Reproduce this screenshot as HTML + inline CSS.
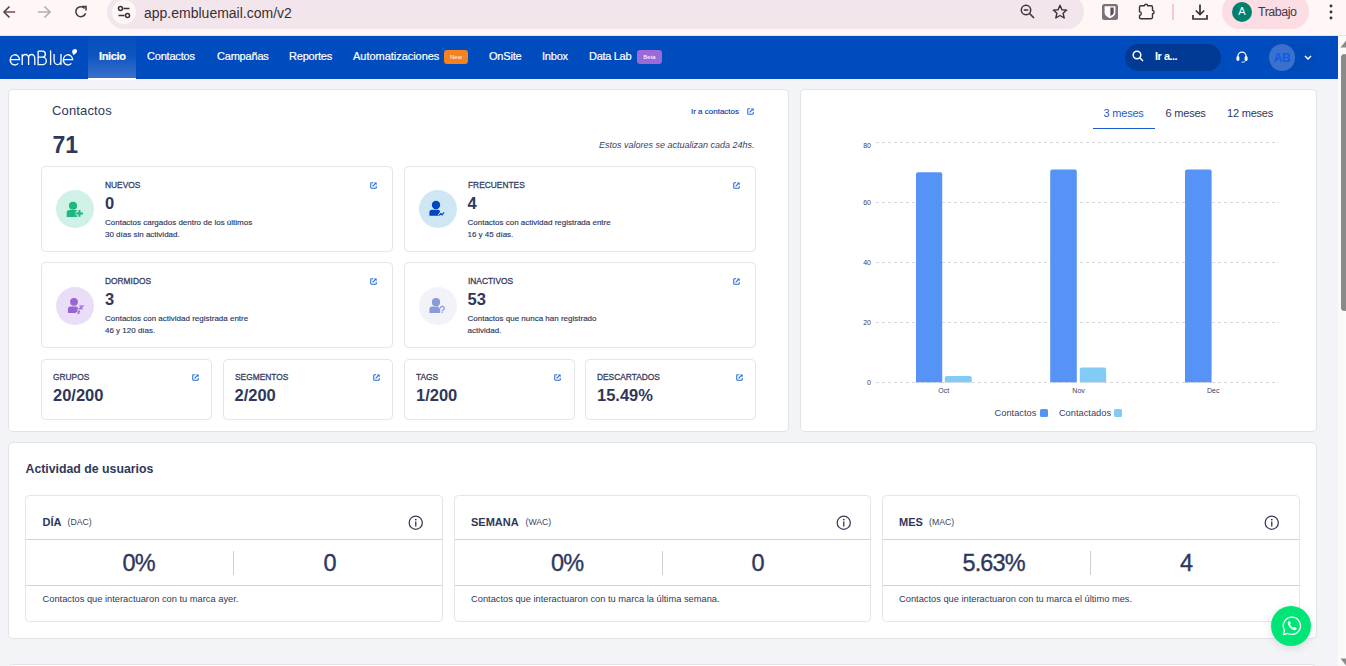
<!DOCTYPE html>
<html><head><meta charset="utf-8">
<style>
*{box-sizing:border-box;margin:0;padding:0}
html,body{width:1346px;height:666px;overflow:hidden}
body{position:relative;background:#F3F4F8;font-family:"Liberation Sans",sans-serif;color:#2F385C}
.a{position:absolute}
.t{position:absolute;white-space:nowrap;line-height:1}
/* chrome */
#chrome{position:absolute;left:0;top:0;width:1346px;height:36px;background:#FEF7F5}
#addr{position:absolute;left:107px;top:-5px;width:977px;height:34px;border-radius:17px;background:#F2E6EC}
#site{position:absolute;left:112px;top:0;width:24px;height:24px;border-radius:12px;background:#FEF7F5}
/* nav */
#nav{position:absolute;left:0;top:36px;width:1338px;height:43px;background:#004BBD}
.nv{position:absolute;top:50px;color:#fff;font-size:11px;line-height:12px;white-space:nowrap;letter-spacing:-0.2px;-webkit-text-stroke:0.2px #fff}
.badge{position:absolute;top:50px;height:14px;border-radius:3px;color:#fff;font-size:6px;line-height:14px;text-align:center}
/* cards */
.card{position:absolute;background:#fff;border:1px solid #E2E3E8;border-radius:5px}
.sc{position:absolute;background:#fff;border:1px solid #E4E5E9;border-radius:4.5px}
.lbl{position:absolute;font-size:9.3px;font-weight:400;line-height:10px;white-space:nowrap;color:#363D5E;letter-spacing:0;-webkit-text-stroke:0.3px #363D5E;transform:scaleX(0.9);transform-origin:0 0}
.val{position:absolute;font-size:16.5px;font-weight:700;line-height:17px;white-space:nowrap;color:#2F385C}
.desc{position:absolute;font-size:8px;line-height:12px;color:#2F385C;white-space:nowrap;-webkit-text-stroke:0.15px #2F385C}
.ext{position:absolute;width:7px;height:7px}
.circ{position:absolute;width:38px;height:38px;border-radius:19px}
</style></head><body>

<!-- browser chrome -->
<div id="chrome"></div>
<div id="addr"></div>
<div id="site"></div>
<div class="a" style="left:0;top:35px;width:1346px;height:1px;background:#F6DDE2"></div>

<!-- back arrow -->
<svg class="a" style="left:2px;top:5px" width="15" height="14" viewBox="0 0 15 14"><path d="M13.2 7H2.5" stroke="#7A4A55" stroke-width="1.5"/><path d="M7.5 1.5L2 7l5.5 5.5" fill="none" stroke="#4A3B50" stroke-width="1.5"/></svg>
<svg class="a" style="left:37px;top:5px" width="15" height="14" viewBox="0 0 15 14"><path d="M1 7h12M7.5 1.5L13 7l-5.5 5.5" fill="none" stroke="#BBAAB2" stroke-width="1.6"/></svg>
<svg class="a" style="left:74px;top:5px" width="14" height="14" viewBox="0 0 14 14"><path d="M11.6 8.2A5 5 0 1 1 10.6 3.4" fill="none" stroke="#4A3B44" stroke-width="1.6"/><path d="M8 1.5h4v4" fill="none" stroke="#4A3B44" stroke-width="1.6"/></svg>
<svg class="a" style="left:117px;top:5px" width="14" height="14" viewBox="0 0 14 14"><circle cx="3.5" cy="3.5" r="2" fill="none" stroke="#3C2F38" stroke-width="1.5"/><path d="M6.5 3.5H12.5M1.5 10.5H7.5" stroke="#3C2F38" stroke-width="1.5"/><circle cx="10.5" cy="10.5" r="2" fill="none" stroke="#3C2F38" stroke-width="1.5"/></svg>
<div class="t" style="left:144px;top:5px;font-size:14px;line-height:16px;color:#3A2E36">app.embluemail.com/v2</div>
<!-- zoom -->
<svg class="a" style="left:1020px;top:4px" width="16" height="16" viewBox="0 0 16 16"><circle cx="6" cy="6" r="4.7" fill="none" stroke="#3C2F38" stroke-width="1.5"/><path d="M3.8 6h4.4M9.5 9.5l4.5 4.5" stroke="#3C2F38" stroke-width="1.6"/></svg>
<svg class="a" style="left:1052px;top:4px" width="16" height="16" viewBox="0 0 16 16"><path d="M8 1.3l1.9 4.4 4.8.4-3.6 3.2 1.1 4.7L8 11.5 3.8 14l1.1-4.7L1.3 6.1l4.8-.4z" fill="none" stroke="#3C2F38" stroke-width="1.4" stroke-linejoin="round"/></svg>
<!-- bitwarden -->
<svg class="a" style="left:1102px;top:4px" width="16" height="16" viewBox="0 0 16 16"><rect x="0" y="0" width="16" height="16" rx="2.5" fill="#807079"/><path d="M2.6 2.2h10.8v6.3c0 2.7-2.6 4.6-5.4 5.8-2.8-1.2-5.4-3.1-5.4-5.8z" fill="#fff"/><path d="M8.4 3.6h3.3v4.9c0 1.5-1.3 2.7-3.3 3.6z" fill="#5E4E58"/></svg>
<!-- puzzle -->
<svg class="a" style="left:1138px;top:3px" width="18" height="17" viewBox="0 0 18 17"><path d="M1.5 4.2Q1.5 2.8 2.9 2.8H6.4A1.6 1.6 0 0 1 9.6 2.8H13.1Q14.5 2.8 14.5 4.2V7.6A1.6 1.6 0 0 1 14.5 10.8V14.3Q14.5 15.7 13.1 15.7H2.9Q1.5 15.7 1.5 14.3V12.4A1.8 1.8 0 0 0 1.5 8.8Z" fill="none" stroke="#3C2F38" stroke-width="1.4" stroke-linejoin="round"/></svg>
<div class="a" style="left:1172px;top:4px;width:1.5px;height:16px;background:#F5C9D3"></div>
<!-- download -->
<svg class="a" style="left:1192px;top:4px" width="16" height="16" viewBox="0 0 16 16"><path d="M8 0.5v10M3.8 6.5L8 10.6l4.2-4.1M1 11v4h14v-4" fill="none" stroke="#3C2F38" stroke-width="1.7"/></svg>
<!-- profile -->
<div class="a" style="left:1222px;top:-6px;width:87px;height:35px;border-radius:17px;background:#FCDDE3"></div>
<div class="a" style="left:1232px;top:2px;width:20px;height:20px;border-radius:10px;background:#02806E"></div>
<div class="t" style="left:1236.5px;top:6px;font-size:11px;color:#fff;width:11px;text-align:center">A</div>
<div class="t" style="left:1258px;top:5px;font-size:12.5px;line-height:14px;color:#46364A;letter-spacing:-0.5px">Trabajo</div>
<svg class="a" style="left:1328px;top:4px" width="6" height="16" viewBox="0 0 6 16"><circle cx="3" cy="2" r="1.45" fill="#3C2F38"/><circle cx="3" cy="8" r="1.45" fill="#3C2F38"/><circle cx="3" cy="14" r="1.45" fill="#3C2F38"/></svg>

<!-- scrollbar -->
<div class="a" style="left:1338px;top:36px;width:8px;height:630px;background:#FAFAFA"></div>
<svg class="a" style="left:1339px;top:40px" width="7" height="8" viewBox="0 0 7 8"><path d="M7 0.5L1.5 7.5H7z" fill="#8A8A8A"/></svg>
<div class="a" style="left:1341px;top:54px;width:7px;height:257px;border-radius:4px;background:#8A8A8A"></div>
<svg class="a" style="left:1339px;top:658px" width="7" height="8" viewBox="0 0 7 8"><path d="M7 7.5L1.5 0.5H7z" fill="#8A8A8A"/></svg>

<!-- app nav -->
<div id="nav"></div>
<div class="a" style="left:88px;top:36px;width:48px;height:43px;background:linear-gradient(#044DBC 0%,#0E55C0 45%,#3A72CA 100%)"></div>
<div class="a" style="left:88px;top:77.5px;width:48px;height:2px;background:#fff"></div>
<svg class="a" style="left:0;top:36px" width="88" height="43" viewBox="0 36 88 43"><g fill="none" stroke="#fff" stroke-width="1.3" stroke-linecap="butt">
<path d="M10.6 59.6H19.6A4.7 5.1 0 1 0 18.3 63.4"/>
<path d="M22.2 65V54.2M22.2 58.2A3.2 3.7 0 0 1 28.6 58.2V65M28.6 58.2A3.1 3.7 0 0 1 34.8 58.2V65"/>
<path d="M38.1 51.1H42.3A3.05 3.05 0 0 1 42.3 57.2H38.1M42.6 57.2A3.7 3.7 0 0 1 42.6 64.6H38.1V51.1"/>
<path d="M50.6 50.4V65"/>
<path d="M54.1 54V60.6A3.45 4 0 0 0 61 60.6V54M61 59V65"/>
<path d="M63.7 59.6H72.7A4.7 5.1 0 1 0 71.4 63.4"/>
</g><path d="M75.1 49.1c1.3 0 2.1 1 2 2.1-.1 1.4-1.6 2.8-4 3.8-.3-1.2-.9-2.1-.9-3.4 0-1.5 1.3-2.5 2.9-2.5z" fill="#fff"/></svg>
<div class="nv" style="left:99px;font-weight:700;letter-spacing:-0.35px">Inicio</div>
<div class="nv" style="left:147px">Contactos</div>
<div class="nv" style="left:217px">Campañas</div>
<div class="nv" style="left:289px">Reportes</div>
<div class="nv" style="left:353px;letter-spacing:-0.03px">Automatizaciones</div>
<div class="badge" style="left:444px;width:24px;background:#F5821F">New</div>
<div class="nv" style="left:489px">OnSite</div>
<div class="nv" style="left:542px">Inbox</div>
<div class="nv" style="left:589px;letter-spacing:-0.3px">Data Lab</div>
<div class="badge" style="left:637px;width:25px;background:#9A6BD8">Beta</div>
<!-- search -->
<div class="a" style="left:1125px;top:44px;width:96px;height:27px;border-radius:13.5px;background:#003A94"></div>
<svg class="a" style="left:1132px;top:50px" width="12" height="12" viewBox="0 0 12 12"><circle cx="5" cy="5" r="3.8" fill="none" stroke="#fff" stroke-width="1.5"/><path d="M7.8 7.8L11 11" stroke="#fff" stroke-width="1.6"/></svg>
<div class="t" style="left:1155px;top:51px;font-size:11px;color:#fff;font-weight:700;letter-spacing:-0.5px">Ir a...</div>
<svg class="a" style="left:1236px;top:50px" width="12" height="13" viewBox="0 0 12 13"><path d="M1.9 7.5V6.2a4.1 4.1 0 0 1 8.2 0V7.5" fill="none" stroke="#fff" stroke-width="1.2"/><rect x="0.4" y="6.3" width="3" height="4.6" rx="1.4" fill="#fff"/><rect x="8.6" y="6.3" width="3" height="4.6" rx="1.4" fill="#fff"/><path d="M9.6 10.5c-.3 1-1.2 1.6-2.6 1.6H5.6" fill="none" stroke="#fff" stroke-width="0.9"/></svg>
<div class="a" style="left:1269px;top:44px;width:46px;height:27px;border-radius:13.5px;background:rgba(0,20,80,0.035)"></div><div class="a" style="left:1269px;top:44px;width:26px;height:26.5px;border-radius:13.25px;background:#3A71CE"></div>
<div class="t" style="left:1269px;top:52px;width:26px;text-align:center;font-size:12px;color:#0F5AE3;font-weight:700;letter-spacing:-0.3px">AB</div>
<svg class="a" style="left:1303.5px;top:55px" width="8" height="6" viewBox="0 0 8 6"><path d="M1 1l3 3 3-3" fill="none" stroke="#fff" stroke-width="1.5"/></svg>

<!-- ========== Contactos card ========== -->
<div class="card" style="left:8px;top:89px;width:781px;height:343px"></div>
<div class="t" style="left:52px;top:104px;font-size:13px;line-height:13px;color:#2F385C;letter-spacing:0.15px">Contactos</div>
<div class="t" style="left:52.5px;top:134px;font-size:23px;line-height:23px;font-weight:700;color:#2F385C">71</div>
<div class="t" style="left:691px;top:107px;font-size:8px;line-height:9px;color:#0A40AC;-webkit-text-stroke:0.15px #0A40AC">Ir a contactos</div>
<svg class="ext" style="left:746.5px;top:107.5px" width="7" height="7" viewBox="0 0 7 7"><path d="M3.1 0.75H1.4A.65.65 0 0 0 .75 1.4V5.6c0 .36.3.65.65.65H5.6c.36 0 .65-.3.65-.65V3.9" fill="none" stroke="#2A6CD6" stroke-width="1.05"/><path d="M2.6 4.4L5.6 1.4" stroke="#2A6CD6" stroke-width="1.1"/><path d="M3.8 0.4H6.6V3.2z" fill="#2A6CD6"/></svg>
<div class="t" style="left:599px;top:139.5px;font-size:9px;line-height:10px;font-style:italic;color:#3A4160">Estos valores se actualizan cada 24hs.</div>

<!-- NUEVOS -->
<div class="sc" style="left:41px;top:166px;width:352px;height:86px"></div>
<div class="circ" style="left:56px;top:190px;background:#CFF1E7"></div>
<svg class="a" style="left:65px;top:199px" width="20" height="20" viewBox="0 0 20 20"><circle cx="8" cy="6.7" r="4.05" fill="#1FB77E"/><path d="M1.7 17.9V13.8a2.8 2.8 0 0 1 2.8-2.8H10.4a2 2 0 0 1 2 1.2V17.9z" fill="#1FB77E"/><path d="M14.5 10.4v7.8M10.6 14.3h7.8" stroke="#CFF1E7" stroke-width="3.8"/><path d="M14.5 11v6.8M11.1 14.4h6.8" stroke="#1FB77E" stroke-width="2"/></svg>
<div class="lbl" style="left:105px;top:180px">NUEVOS</div>
<div class="val" style="left:105px;top:195px">0</div>
<div class="desc" style="left:105px;top:217px">Contactos cargados dentro de los últimos<br>30 días sin actividad.</div>
<svg class="ext" style="left:369.5px;top:181.5px" width="7" height="7" viewBox="0 0 7 7"><path d="M3.1 0.75H1.4A.65.65 0 0 0 .75 1.4V5.6c0 .36.3.65.65.65H5.6c.36 0 .65-.3.65-.65V3.9" fill="none" stroke="#2A6CD6" stroke-width="1.05"/><path d="M2.6 4.4L5.6 1.4" stroke="#2A6CD6" stroke-width="1.1"/><path d="M3.8 0.4H6.6V3.2z" fill="#2A6CD6"/></svg>

<!-- FRECUENTES -->
<div class="sc" style="left:404px;top:166px;width:352px;height:86px"></div>
<div class="circ" style="left:419px;top:190px;background:#CFE7F5"></div>
<svg class="a" style="left:428px;top:199px" width="20" height="20" viewBox="0 0 20 20"><circle cx="8" cy="6" r="4.2" fill="#0047C0"/><path d="M1.4 16.8V13.3a2.5 2.5 0 0 1 2.5-2.5H9.9a2.1 2.1 0 0 1 2 1.3V16.8z" fill="#0047C0"/><path d="M10.9 16.6l1.9-2 1.3 1.1 2.3-2.7" fill="none" stroke="#CFE7F5" stroke-width="3"/><path d="M11.2 16.4l1.6-1.7 1.3 1.1 2-2.4" fill="none" stroke="#0047C0" stroke-width="1.25"/></svg>
<div class="lbl" style="left:467.5px;top:180px">FRECUENTES</div>
<div class="val" style="left:467.5px;top:195px">4</div>
<div class="desc" style="left:467.5px;top:217px">Contactos con actividad registrada entre<br>16 y 45 días.</div>
<svg class="ext" style="left:732.5px;top:181.5px" width="7" height="7" viewBox="0 0 7 7"><path d="M3.1 0.75H1.4A.65.65 0 0 0 .75 1.4V5.6c0 .36.3.65.65.65H5.6c.36 0 .65-.3.65-.65V3.9" fill="none" stroke="#2A6CD6" stroke-width="1.05"/><path d="M2.6 4.4L5.6 1.4" stroke="#2A6CD6" stroke-width="1.1"/><path d="M3.8 0.4H6.6V3.2z" fill="#2A6CD6"/></svg>

<!-- DORMIDOS -->
<div class="sc" style="left:41px;top:262px;width:352px;height:86px"></div>
<div class="circ" style="left:56px;top:286.5px;background:#EADDF7"></div>
<svg class="a" style="left:65px;top:295.5px" width="20" height="20" viewBox="0 0 20 20"><circle cx="9" cy="5.8" r="3.9" fill="#9766D3"/><path d="M2.9 17V13a2.5 2.5 0 0 1 2.5-2.5H10.8a2 2 0 0 1 2 1.2V17z" fill="#9766D3"/><path d="M12.2 15h3l-3 2.2h3" fill="none" stroke="#EADDF7" stroke-width="2.6"/><path d="M14.3 10h3.6l-3.6 2.7h3.6" fill="none" stroke="#9766D3" stroke-width="1.1"/><path d="M12.4 15.1h2.6l-2.6 2h2.6" fill="none" stroke="#9766D3" stroke-width="1"/></svg>
<div class="lbl" style="left:105px;top:276px">DORMIDOS</div>
<div class="val" style="left:105px;top:291px">3</div>
<div class="desc" style="left:105px;top:313px">Contactos con actividad registrada entre<br>46 y 120 días.</div>
<svg class="ext" style="left:369.5px;top:277.5px" width="7" height="7" viewBox="0 0 7 7"><path d="M3.1 0.75H1.4A.65.65 0 0 0 .75 1.4V5.6c0 .36.3.65.65.65H5.6c.36 0 .65-.3.65-.65V3.9" fill="none" stroke="#2A6CD6" stroke-width="1.05"/><path d="M2.6 4.4L5.6 1.4" stroke="#2A6CD6" stroke-width="1.1"/><path d="M3.8 0.4H6.6V3.2z" fill="#2A6CD6"/></svg>

<!-- INACTIVOS -->
<div class="sc" style="left:404px;top:262px;width:352px;height:86px"></div>
<div class="circ" style="left:419px;top:286.5px;background:#F1F3F9"></div>
<svg class="a" style="left:428px;top:295.5px" width="20" height="20" viewBox="0 0 20 20"><circle cx="8" cy="6.2" r="4.1" fill="#8A9BDB"/><path d="M1.4 16.9V13.3a2.8 2.8 0 0 1 2.8-2.8H10a2.2 2.2 0 0 1 2.2 1.5V16.9z" fill="#8A9BDB"/><path d="M12.4 12.3a1.95 1.95 0 1 1 2.9 1.7c-.75.4-1 .8-1 1.4" fill="none" stroke="#F1F3F9" stroke-width="3"/><path d="M12.4 12.3a1.95 1.95 0 1 1 2.9 1.7c-.75.4-1 .8-1 1.4" fill="none" stroke="#8A9BDB" stroke-width="1.25"/><circle cx="14.3" cy="16.6" r="0.7" fill="#8A9BDB"/></svg>
<div class="lbl" style="left:467.5px;top:276px">INACTIVOS</div>
<div class="val" style="left:467.5px;top:291px">53</div>
<div class="desc" style="left:467.5px;top:313px">Contactos que nunca han registrado<br>actividad.</div>
<svg class="ext" style="left:732.5px;top:277.5px" width="7" height="7" viewBox="0 0 7 7"><path d="M3.1 0.75H1.4A.65.65 0 0 0 .75 1.4V5.6c0 .36.3.65.65.65H5.6c.36 0 .65-.3.65-.65V3.9" fill="none" stroke="#2A6CD6" stroke-width="1.05"/><path d="M2.6 4.4L5.6 1.4" stroke="#2A6CD6" stroke-width="1.1"/><path d="M3.8 0.4H6.6V3.2z" fill="#2A6CD6"/></svg>

<!-- small cards -->
<div class="sc" style="left:41px;top:359px;width:171px;height:61px"></div>
<div class="lbl" style="left:53px;top:372px">GRUPOS</div>
<div class="val" style="left:53px;top:387px">20/200</div>
<svg class="ext" style="left:191.5px;top:373.5px" width="7" height="7" viewBox="0 0 7 7"><path d="M3.1 0.75H1.4A.65.65 0 0 0 .75 1.4V5.6c0 .36.3.65.65.65H5.6c.36 0 .65-.3.65-.65V3.9" fill="none" stroke="#2A6CD6" stroke-width="1.05"/><path d="M2.6 4.4L5.6 1.4" stroke="#2A6CD6" stroke-width="1.1"/><path d="M3.8 0.4H6.6V3.2z" fill="#2A6CD6"/></svg>

<div class="sc" style="left:223px;top:359px;width:170px;height:61px"></div>
<div class="lbl" style="left:234.5px;top:372px">SEGMENTOS</div>
<div class="val" style="left:234.5px;top:387px">2/200</div>
<svg class="ext" style="left:372.5px;top:373.5px" width="7" height="7" viewBox="0 0 7 7"><path d="M3.1 0.75H1.4A.65.65 0 0 0 .75 1.4V5.6c0 .36.3.65.65.65H5.6c.36 0 .65-.3.65-.65V3.9" fill="none" stroke="#2A6CD6" stroke-width="1.05"/><path d="M2.6 4.4L5.6 1.4" stroke="#2A6CD6" stroke-width="1.1"/><path d="M3.8 0.4H6.6V3.2z" fill="#2A6CD6"/></svg>

<div class="sc" style="left:404px;top:359px;width:171px;height:61px"></div>
<div class="lbl" style="left:416px;top:372px">TAGS</div>
<div class="val" style="left:416px;top:387px">1/200</div>
<svg class="ext" style="left:553.5px;top:373.5px" width="7" height="7" viewBox="0 0 7 7"><path d="M3.1 0.75H1.4A.65.65 0 0 0 .75 1.4V5.6c0 .36.3.65.65.65H5.6c.36 0 .65-.3.65-.65V3.9" fill="none" stroke="#2A6CD6" stroke-width="1.05"/><path d="M2.6 4.4L5.6 1.4" stroke="#2A6CD6" stroke-width="1.1"/><path d="M3.8 0.4H6.6V3.2z" fill="#2A6CD6"/></svg>

<div class="sc" style="left:585px;top:359px;width:171px;height:61px"></div>
<div class="lbl" style="left:597px;top:372px">DESCARTADOS</div>
<div class="val" style="left:597px;top:387px">15.49%</div>
<svg class="ext" style="left:735.5px;top:373.5px" width="7" height="7" viewBox="0 0 7 7"><path d="M3.1 0.75H1.4A.65.65 0 0 0 .75 1.4V5.6c0 .36.3.65.65.65H5.6c.36 0 .65-.3.65-.65V3.9" fill="none" stroke="#2A6CD6" stroke-width="1.05"/><path d="M2.6 4.4L5.6 1.4" stroke="#2A6CD6" stroke-width="1.1"/><path d="M3.8 0.4H6.6V3.2z" fill="#2A6CD6"/></svg>

<!-- ========== Chart card ========== -->
<div class="card" style="left:800px;top:89px;width:517px;height:343px"></div>
<div class="t" style="left:1103.5px;top:107px;font-size:11px;line-height:12px;color:#1D5BD0;letter-spacing:-0.2px">3 meses</div>
<div class="t" style="left:1165.5px;top:107px;font-size:11px;line-height:12px;color:#2F385C;letter-spacing:-0.2px">6 meses</div>
<div class="t" style="left:1227px;top:107px;font-size:11px;line-height:12px;color:#2F385C;letter-spacing:-0.2px">12 meses</div>
<div class="a" style="left:1093px;top:127.5px;width:62px;height:1.6px;background:#1D5BD0"></div>

<svg class="a" style="left:850px;top:135px" width="440" height="290" viewBox="850 135 440 290">
  <g stroke="#D6D7DC" stroke-width="1" stroke-dasharray="3 3">
    <path d="M876 142.5H1279M876 202.5H1279M876 262.5H1279M876 322.5H1279"/>
  </g>
  <g font-family="Liberation Sans" font-size="7" fill="#3C4260" text-anchor="end">
    <text x="871" y="148">80</text><text x="871" y="205">60</text><text x="871" y="265">40</text><text x="871" y="325">20</text><text x="871" y="385">0</text>
  </g>
  <path d="M916 382.5V174.3a2 2 0 0 1 2-2h22.2a2 2 0 0 1 2 2V382.5z" fill="#5593F7"/>
  <path d="M944.8 382.5V378a2 2 0 0 1 2-2h23a2 2 0 0 1 2 2V382.5z" fill="#82CBF6"/>
  <path d="M1050.2 382.5V171.4a2 2 0 0 1 2-2h22.6a2 2 0 0 1 2 2V382.5z" fill="#5593F7"/>
  <path d="M1079.8 382.5V369.4a2 2 0 0 1 2-2h22.4a2 2 0 0 1 2 2V382.5z" fill="#82CBF6"/>
  <path d="M1185 382.5V171.4a2 2 0 0 1 2-2h22.6a2 2 0 0 1 2 2V382.5z" fill="#5593F7"/>
  <path d="M876 382.5H1279" stroke="#D6D7DC" stroke-width="1" stroke-dasharray="3 3"/>
  <g font-family="Liberation Sans" font-size="7" fill="#3C4260" text-anchor="middle">
    <text x="943.8" y="393">Oct</text><text x="1078.6" y="393">Nov</text><text x="1213.3" y="393">Dec</text>
  </g>
</svg>
<div class="t" style="left:994.5px;top:407.5px;font-size:9.3px;line-height:10px;color:#3A4160">Contactos</div>
<div class="a" style="left:1040.2px;top:409px;width:7.8px;height:7.8px;border-radius:1.5px;background:#5593F7"></div>
<div class="t" style="left:1058.9px;top:407.5px;font-size:9.3px;line-height:10px;color:#3A4160">Contactados</div>
<div class="a" style="left:1114.1px;top:409px;width:7.8px;height:7.8px;border-radius:1.5px;background:#82CBF6"></div>

<!-- ========== Actividad de usuarios ========== -->
<div class="card" style="left:8px;top:442px;width:1309px;height:197px"></div>
<div class="t" style="left:25.5px;top:462px;font-size:12.3px;line-height:14px;font-weight:700;color:#2F385C">Actividad de usuarios</div>

<!-- DIA -->
<div class="sc" style="left:25px;top:495px;width:418px;height:127px"></div>
<div class="a" style="left:26px;top:539px;width:416px;height:1.2px;background:#D2D3DA"></div>
<div class="a" style="left:26px;top:585px;width:416px;height:1.2px;background:#D2D3DA"></div>
<div class="a" style="left:233px;top:551px;width:1px;height:24px;background:#CFD0D6"></div>
<div class="t" style="left:42.5px;top:516px;font-size:11px;line-height:12px;font-weight:700;color:#2F385C">DÍA</div>
<div class="t" style="left:67.5px;top:517px;font-size:8.7px;line-height:10px;color:#3A4160">(DAC)</div>
<svg class="a" style="left:408px;top:515px" width="15.5" height="15.5" viewBox="0 0 16 16"><circle cx="8" cy="8" r="6.8" fill="none" stroke="#3A3B5C" stroke-width="1.3"/><circle cx="8" cy="4.7" r="0.95" fill="#3A3B5C"/><path d="M8 6.8v5" stroke="#3A3B5C" stroke-width="1.4"/></svg>
<div class="t" style="left:122.5px;top:551px;font-size:23.5px;line-height:24px;color:#2F385C;letter-spacing:-0.9px;-webkit-text-stroke:0.35px #2F385C">0%</div>
<div class="t" style="left:323.5px;top:551px;font-size:23.5px;line-height:24px;color:#2F385C;-webkit-text-stroke:0.35px #2F385C">0</div>
<div class="t" style="left:42.5px;top:593.5px;font-size:9.3px;line-height:11px;color:#2F385C">Contactos que interactuaron con tu marca ayer.</div>

<!-- SEMANA -->
<div class="sc" style="left:454px;top:495px;width:417px;height:127px"></div>
<div class="a" style="left:454.5px;top:539px;width:416px;height:1.2px;background:#D2D3DA"></div>
<div class="a" style="left:454.5px;top:585px;width:416px;height:1.2px;background:#D2D3DA"></div>
<div class="a" style="left:661.5px;top:551px;width:1px;height:24px;background:#CFD0D6"></div>
<div class="t" style="left:471px;top:516px;font-size:11px;line-height:12px;font-weight:700;color:#2F385C">SEMANA</div>
<div class="t" style="left:525.5px;top:517px;font-size:8.7px;line-height:10px;color:#3A4160">(WAC)</div>
<svg class="a" style="left:836px;top:515px" width="15.5" height="15.5" viewBox="0 0 16 16"><circle cx="8" cy="8" r="6.8" fill="none" stroke="#3A3B5C" stroke-width="1.3"/><circle cx="8" cy="4.7" r="0.95" fill="#3A3B5C"/><path d="M8 6.8v5" stroke="#3A3B5C" stroke-width="1.4"/></svg>
<div class="t" style="left:551px;top:551px;font-size:23.5px;line-height:24px;color:#2F385C;letter-spacing:-0.9px;-webkit-text-stroke:0.35px #2F385C">0%</div>
<div class="t" style="left:751.5px;top:551px;font-size:23.5px;line-height:24px;color:#2F385C;-webkit-text-stroke:0.35px #2F385C">0</div>
<div class="t" style="left:471px;top:593.5px;font-size:9.3px;line-height:11px;color:#2F385C">Contactos que interactuaron con tu marca la última semana.</div>

<!-- MES -->
<div class="sc" style="left:882px;top:495px;width:418px;height:127px"></div>
<div class="a" style="left:883px;top:539px;width:416px;height:1.2px;background:#D2D3DA"></div>
<div class="a" style="left:883px;top:585px;width:416px;height:1.2px;background:#D2D3DA"></div>
<div class="a" style="left:1090px;top:551px;width:1px;height:24px;background:#CFD0D6"></div>
<div class="t" style="left:899px;top:516px;font-size:11px;line-height:12px;font-weight:700;color:#2F385C">MES</div>
<div class="t" style="left:929px;top:517px;font-size:8.7px;line-height:10px;color:#3A4160">(MAC)</div>
<svg class="a" style="left:1264px;top:515px" width="15.5" height="15.5" viewBox="0 0 16 16"><circle cx="8" cy="8" r="6.8" fill="none" stroke="#3A3B5C" stroke-width="1.3"/><circle cx="8" cy="4.7" r="0.95" fill="#3A3B5C"/><path d="M8 6.8v5" stroke="#3A3B5C" stroke-width="1.4"/></svg>
<div class="t" style="left:962.5px;top:551px;font-size:23.5px;line-height:24px;color:#2F385C;letter-spacing:-0.9px;-webkit-text-stroke:0.35px #2F385C">5.63%</div>
<div class="t" style="left:1180px;top:551px;font-size:23.5px;line-height:24px;color:#2F385C;-webkit-text-stroke:0.35px #2F385C">4</div>
<div class="t" style="left:899px;top:593.5px;font-size:9.3px;line-height:11px;color:#2F385C">Contactos que interactuaron con tu marca el último mes.</div>

<!-- whatsapp -->
<div class="a" style="left:1271px;top:606px;width:40px;height:40px;border-radius:20px;background:#00E676;box-shadow:0 2px 10px rgba(0,0,0,0.12)"></div>
<svg class="a" style="left:1281.5px;top:615.6px" width="20" height="20" viewBox="0 0 20 20"><g transform="translate(10 10) scale(1.08) translate(-10 -10)"><path d="M10 1.8a8 8 0 0 0-6.9 12.1L2 18l4.2-1.1A8 8 0 1 0 10 1.8z" fill="none" stroke="#fff" stroke-width="1.2" stroke-linejoin="round"/><path d="M7 5.6c.4-.2.8-.2 1 .2l.8 1.6c.1.3 0 .6-.2.8l-.5.5c.6 1.3 1.6 2.3 2.9 2.9l.5-.5c.2-.2.5-.3.8-.2l1.6.8c.4.2.4.6.2 1-.5.9-1.3 1.3-2.2 1.1C9.6 13.3 6.7 10.4 6.2 8 6 7 6.3 6.100 7 5.6z" fill="#fff"/></g></svg>

<!-- bottom card peeking -->
<div class="card" style="left:8px;top:664px;width:1309px;height:20px"></div>

</body></html>
